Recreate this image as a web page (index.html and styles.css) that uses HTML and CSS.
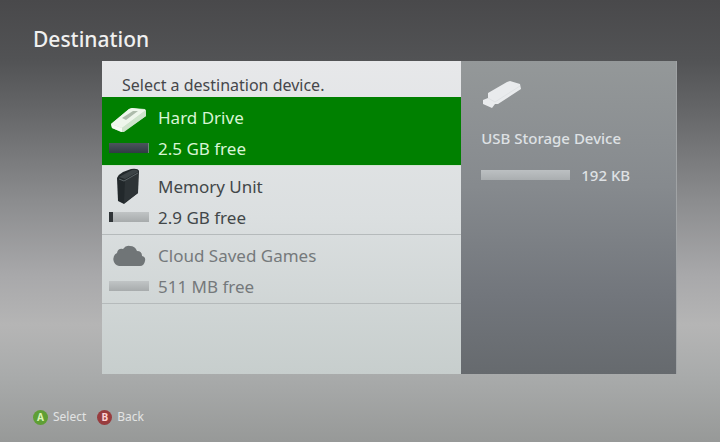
FILE: index.html
```html
<!DOCTYPE html>
<html lang="en">
<head>
	<meta charset="UTF-8">
	<title>Destination</title>
	<link rel="stylesheet" href="styles.css">
</head>
<body>
	<h1 class="title">Destination</h1>
	<main class="panel">
		<section class="devices">
			<h2 class="hint">Select a destination device.</h2>
			<ul class="list">
				<li>
					<button class="device select" type="button">
						<svg class="icon" viewBox="0 0 40 36" aria-hidden="true">
							<path d="M2 25 L20 10 L23 9 L36 10 L37 12 L37 17 L15 33 L12 33 L3 29 Z" fill="#c9e0c7"/>
							<path d="M2 25 L20 10 L23 9 L37 11 L13 29 Z" fill="#eef6ec"/>
							<path d="M2 25 L13 29 L13 33 L3 29 Z" fill="#f6faf4"/>
							<path d="M13 29 L37 11 L37 17 L14 33 Z" fill="#cfe4cd"/>
							<path d="M13 19 L24 12 L29 12 L17 21 Z" fill="#adbbab"/>
						</svg>
						<span class="name">Hard Drive</span>
						<span class="bar dark"></span>
						<span class="free">2.5 GB free</span>
					</button>
				</li>
				<li>
					<button class="device" type="button">
						<svg class="icon" viewBox="0 0 40 36" aria-hidden="true">
							<path d="M8 10 Q10 6 14 4 L22 1 Q29 0 30 3 L29 25 L15 36 L9 33 Z" fill="#22282b"/>
							<path d="M10 9 L23 2 Q29 1 29 4 L16 11 Z" fill="#3c4346"/>
							<path d="M16 12 L29 4 L29 25 L15 35 Z" fill="#2d3336"/>
							<path d="M10 11 L15 13 L29 5" stroke="#5b6366" fill="none"/>
						</svg>
						<span class="name">Memory Unit</span>
						<span class="bar part"></span>
						<span class="free">2.9 GB free</span>
					</button>
				</li>
				<li>
					<button class="device off" type="button">
						<svg class="icon" viewBox="0 0 40 36" aria-hidden="true">
							<path d="M10 29 A7 7 0 0 1 8 16 Q9 11 14 12 Q17 8 21 9 Q26 9 28 14 Q33 14 33 19 Q37 20 36 24 Q35 29 31 29 Z" fill="#707577"/>
						</svg>
						<span class="name">Cloud Saved Games</span>
						<span class="bar"></span>
						<span class="free">511 MB free</span>
					</button>
				</li>
			</ul>
		</section>
		<aside class="detail">
			<svg class="usb" viewBox="0 0 40 28" aria-hidden="true">
				<path d="M2 19 L7 17 L7 12 L26 1 L29 0 L39 3 L40 8 L17 23 L14 23 L11 27 L2 23 Z" fill="#e9ebed"/>
				<path d="M7 17 L14 21 L39 5" stroke="#dfe2e4" fill="none"/>
			</svg>
			<p class="usb-name">USB Storage Device</p>
			<p class="usage"><span class="bar wide"></span>192 KB</p>
		</aside>
	</main>
	<footer class="keys">
		<button class="key" type="button"><span class="dot green">A</span>Select</button>
		<button class="key" type="button"><span class="dot red">B</span>Back</button>
	</footer>
</body>
</html>
```

FILE: styles.css
```css
*{
	margin:0;
	padding:0;
	box-sizing:border-box;
}
body{
	min-height:100vh;
	padding:24px 6% 0 33px;
	font-family:"Noto Sans","Open Sans",sans-serif;
	font-size:17px;
	background:linear-gradient(#49494b 0,#525355 60px,#656668 110px,#8b8c8e 200px,#a8a8aa 275px,#b5b5b5 325px,#a9abab 375px,#979998 442px);
}
ul{
	list-style:none;
}
button{
	border:0;
	background:none;
	font:inherit;
	color:inherit;
	cursor:pointer;
}
.title{
	height:37px;
	font-size:21px;
	line-height:30px;
	font-weight:500;
	color:#f0f0f0;
}
.panel{
	display:grid;
	grid-template-columns:5fr 3fr;
	min-height:313px;
	margin-left:69px;
}
.devices{
	background:linear-gradient(#e7e8ea,#dbdfe0 50%,#c7cecd);
}
.hint{
	height:36px;
	padding:13px 20px 0;
	font-size:16px;
	line-height:22px;
	font-weight:400;
	color:#46474b;
}
.list li{
	border-bottom:1px solid #b5babb;
}
.list li:first-child{
	border-color:#cfe3cf;
}
.device{
	display:grid;
	grid-template-columns:40px 1fr;
	grid-template-rows:36px 26px;
	column-gap:9px;
	align-items:center;
	width:100%;
	height:68px;
	padding:2px 7px 3px;
	text-align:left;
	color:#424749;
}
.device.select{
	background:#008000;
	color:#d8f5d5;
}
.device.off{
	color:#75797b;
}
.icon{
	width:40px;
	height:36px;
}
.bar{
	display:block;
	height:10px;
	background:linear-gradient(#c0c4c5,#a7abac);
}
.bar.dark{
	background:linear-gradient(#4c555c,#2f3b43);
	border-right:1px solid #6d8b78;
}
.bar.part{
	border-left:4px solid #303538;
}
.bar.wide{
	width:89px;
	background:linear-gradient(#bcc0c2,#aaaeb0);
}
.detail{
	padding:20px;
	font-size:15px;
	line-height:22px;
	font-weight:500;
	color:#dee1e4;
	background:linear-gradient(#949899,#868a8e 40%,#72767c 75%,#666a6e);
	border-right:1px solid #a0a3a5;
}
.usb{
	display:block;
	width:40px;
	height:28px;
}
.usb-name{
	margin-top:18px;
}
.usage{
	display:flex;
	align-items:center;
	gap:11px;
	margin-top:15px;
}
.keys{
	display:flex;
	gap:11px;
	margin-top:34px;
}
.key{
	display:flex;
	align-items:center;
	gap:5px;
	font-size:12px;
	line-height:18px;
	color:#e2e3e3;
}
.dot{
	width:15px;
	height:15px;
	border-radius:50%;
	font-size:10px;
	line-height:15px;
	font-weight:700;
	text-align:center;
}
.dot.green{
	background:#5f9f35;
	color:#dcf5b8;
}
.dot.red{
	background:#983c3e;
	color:#ffd2d2;
}
```
